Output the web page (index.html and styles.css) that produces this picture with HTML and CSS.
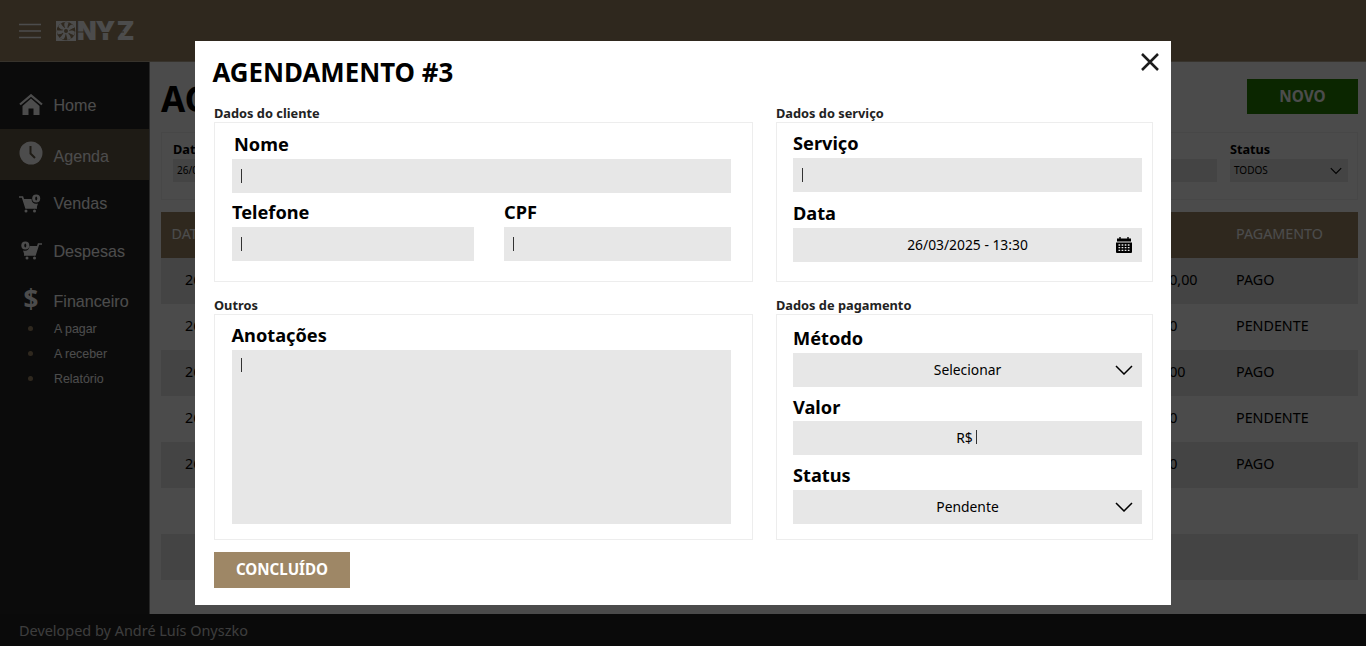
FILE: index.html
```html
<!DOCTYPE html>
<html lang="pt-BR">
<head>
<meta charset="utf-8">
<title>Agenda</title>
<link rel="stylesheet" href="styles.css">
</head>
<body>
<div class="app">
  <header class="topbar">
    <svg class="menu" width="22" height="16" viewBox="0 0 22 16"><path d="M0 1.500h22M0 8h22M0 14.500h22" stroke="#fff" stroke-width="1.300"/></svg>
    <svg class="logo" width="80" height="22" viewBox="0 0 80 22">
      <rect x="0" y="1" width="20" height="20" fill="#fff"/>
      <circle cx="10" cy="11" r="9.300" fill="#9e8766"/>
      <g fill="#fff">
        <path id="blade" d="M9.800 8.500C8 6.500 8 4 8.800 2.200Q10.500 1.600 12.700 2.400C11.500 4.500 12 6.500 11 8.500Z"/>
        <use href="#blade" transform="rotate(51.400 10 11)"/>
        <use href="#blade" transform="rotate(102.800 10 11)"/>
        <use href="#blade" transform="rotate(154.300 10 11)"/>
        <use href="#blade" transform="rotate(205.700 10 11)"/>
        <use href="#blade" transform="rotate(257.100 10 11)"/>
        <use href="#blade" transform="rotate(308.600 10 11)"/>
        <circle cx="10" cy="11" r="3.400"/>
      </g>
      <circle cx="10" cy="11" r="2" fill="#9e8766"/>
      <text class="logo-text" x="21 39.500 60.800" y="20.300">NYZ</text>
      <path d="M21 12h7M44 12.500h11M63 12h5" stroke="#9e8766" stroke-width="1.100"/>
    </svg>
  </header>
  <div class="body">
    <nav class="sidebar">
      <a class="item home"><svg width="24" height="22" viewBox="0 0 24 22"><path d="M1 10.500 12 1.300 23 10.500" fill="none" stroke="#fff" stroke-width="2.200"/><path d="M12 4.500 20.500 12v9h-6v-6.500h-5V21h-6v-9Z" fill="#fff"/></svg><span>Home</span></a>
      <a class="item agenda"><svg width="24" height="24" viewBox="0 0 24 24"><circle cx="12" cy="12" r="11.500" fill="#fff"/><path d="M11.500 5v7.500l4.500 4.500" fill="none" stroke="#675a46" stroke-width="2"/></svg><span>Agenda</span></a>
      <a class="item vendas"><svg width="24" height="20" viewBox="0 0 24 20"><path d="M0 3h3.500L7 14h11" fill="none" stroke="#fff" stroke-width="1.700"/><path d="M4 5h8.500c0 4 3 5.500 6.500 4.500l-1.500 4.500H7Z" fill="#fff"/><circle cx="7" cy="17" r="1.500" fill="#fff"/><circle cx="15.500" cy="17" r="1.500" fill="#fff"/><circle cx="17.200" cy="4.500" r="4" fill="#fff"/><ellipse cx="17.200" cy="4.500" rx="1" ry="1.900" fill="#252525"/></svg><span>Vendas</span></a>
      <a class="item despesas"><svg width="24" height="20" viewBox="0 0 24 20"><path d="M23 3h-3.500L16 14H5" fill="none" stroke="#fff" stroke-width="1.700"/><path d="M19 5h-8.500c0 4-3 5.500-6.500 4.500L5.500 14H16Z" fill="#fff"/><circle cx="8" cy="17" r="1.500" fill="#fff"/><circle cx="15.500" cy="17" r="1.500" fill="#fff"/><circle cx="6.300" cy="4.500" r="4" fill="#fff"/><ellipse cx="6.300" cy="4.500" rx="1" ry="1.900" fill="#252525"/></svg><span>Despesas</span></a>
      <a class="item financeiro"><b class="dollar">$</b><span>Financeiro</span></a>
      <a class="sub"><i></i>A pagar</a>
      <a class="sub"><i></i>A receber</a>
      <a class="sub"><i></i>Relatório</a>
    </nav>
    <main class="content">
      <div class="page-head"><h1>AG</h1><button class="novo">NOVO</button></div>
      <section class="filters">
        <div class="filter date"><label>Data</label><div class="fbox">26/0</div></div>
        <div class="filter grow"><div class="fbox blank"></div></div>
        <div class="filter status"><label>Status</label><div class="fbox">TODOS<svg width="12" height="8" viewBox="0 0 12 8"><path d="M.8 1.200 6 6.500l5.200-5.300" fill="none" stroke="#000" stroke-width="1.100"/></svg></div></div>
      </section>
      <div class="table">
        <div class="tr th"><span>DATA</span><span></span><span>PAGAMENTO</span></div>
        <div class="tr"><span>26</span><span>R$ 1.200,00</span><span>PAGO</span></div>
        <div class="tr"><span>26</span><span>R$ 50,00</span><span>PENDENTE</span></div>
        <div class="tr"><span>26</span><span>R$ 200,00</span><span>PAGO</span></div>
        <div class="tr"><span>26</span><span>R$ 50,00</span><span>PENDENTE</span></div>
        <div class="tr"><span>26</span><span>R$ 80,00</span><span>PAGO</span></div>
        <div class="tr"></div>
        <div class="tr"></div>
      </div>
    </main>
  </div>
  <footer class="footer">Developed by André Luís Onyszko</footer>
</div>

<div class="overlay">
  <div class="modal">
    <div class="modal-head">
      <h2>AGENDAMENTO #3</h2>
      <svg width="18" height="18" viewBox="0 0 18 18"><path d="M1 1l16 16M17 1 1 17" stroke="#1c1c1c" stroke-width="2.500"/></svg>
    </div>
    <div class="grid">
      <section>
        <h3>Dados do cliente</h3>
        <div class="card client">
          <div class="field"><label class="in2">Nome</label><div class="input"><i class="caret"></i></div></div>
          <div class="pair">
            <div class="field tel"><label class="in1">Telefone</label><div class="input"><i class="caret"></i></div></div>
            <div class="field cpf"><label>CPF</label><div class="input"><i class="caret"></i></div></div>
          </div>
        </div>
      </section>
      <section>
        <h3>Dados do serviço</h3>
        <div class="card service">
          <div class="field"><label>Serviço</label><div class="input"><i class="caret"></i></div></div>
          <div class="field"><label>Data</label><div class="input center"><span>26/03/2025 - 13:30</span>
            <svg class="cal" width="16" height="16" viewBox="0 0 16 16"><path d="M1 1.500h14v3H1zM0 5.500h16V15q0 1-1 1H1q-1 0-1-1Z" fill="#000"/><path d="M4 0v3M12 0v3" stroke="#000" stroke-width="1.400"/><path d="M2.500 8h11M2.500 10.700h11M2.500 13.400h11" stroke="#e7e7e7" stroke-width="1.300" stroke-dasharray="1.700 1.400"/></svg></div></div>
        </div>
      </section>
      <section>
        <h3>Outros</h3>
        <div class="card notes">
          <div class="field"><label>Anotações</label><div class="input area"><i class="caret"></i></div></div>
        </div>
      </section>
      <section>
        <h3>Dados de pagamento</h3>
        <div class="card payment">
          <div class="field"><label>Método</label><div class="input center"><span>Selecionar</span><svg class="chev" width="18" height="10" viewBox="0 0 18 10"><path d="M1 1l8 8 8-8" fill="none" stroke="#000" stroke-width="1.500"/></svg></div></div>
          <div class="field valor"><label>Valor</label><div class="input center"><span class="money">R$<i class="caret"></i></span></div></div>
          <div class="field"><label>Status</label><div class="input center"><span>Pendente</span><svg class="chev" width="18" height="10" viewBox="0 0 18 10"><path d="M1 1l8 8 8-8" fill="none" stroke="#000" stroke-width="1.500"/></svg></div></div>
        </div>
      </section>
    </div>
    <button class="done">CONCLUÍDO</button>
  </div>
</div>
</body>
</html>
```
FILE: styles.css
```css
* { box-sizing: border-box; }
body { margin: 0; font-family: "Noto Sans", "Open Sans", sans-serif; color: #000; overflow: hidden; }
h1, h2, h3 { margin: 0; font-weight: 700; }
button { border: 0; padding: 0 0 2px; font-family: inherit; font-weight: 700; color: #fff; }
svg { display: block; flex: none; }

.app { width: 1366px; height: 646px; display: flex; flex-direction: column; background: #fafafa; }
.topbar { height: 62px; flex: none; background: #9e8766; border-bottom: 1px solid #b8ab95; display: flex; align-items: center; padding-left: 19px; gap: 15px; }
.logo { overflow: visible; }
.logo-text { font: 900 25.500px/1 Inter, sans-serif; fill: #fff; }
.body { flex: 1; display: flex; min-height: 0; }

.sidebar { width: 150px; background: #252525; border-right: 1px solid #888; padding-top: 19px; font-family: "Liberation Sans", sans-serif; color: #fff; }
.item { display: flex; align-items: center; height: 48px; padding-left: 19px; font-size: 16.100px; }
.item svg { width: 24px; margin-right: 10.500px; }
.item span { line-height: 20px; }
.item.agenda { height: 51px; background: #675a46; }
.item.agenda svg { margin-top: -3px; }
.item.agenda span { padding-top: 2px; }
.item.vendas { height: 47px; }
.item.vendas span { margin-top: -1px; }
.item.financeiro { height: 41px; padding-top: 2px; }
.item.financeiro span { padding-top: 8px; }
.dollar { width: 24px; margin-right: 10.500px; text-align: center; font: 700 26px/30px "Noto Sans", sans-serif; margin-top: 4px; }
.sub { display: flex; align-items: center; height: 25px; font-size: 12.400px; padding-left: 28px; }
.sub i { width: 5px; height: 5px; border-radius: 50%; background: #9e8766; margin-right: 21px; }

.content { flex: 1; padding: 17px 8px 0 11px; }
.page-head { display: flex; justify-content: space-between; height: 53px; }
h1 { font-size: 35px; line-height: 39px; }
.novo { width: 111px; height: 35px; background: #258000; font-size: 15.300px; }
.filters { height: 68px; border: 1px solid #efefef; padding: 7px 9px 0 11px; display: flex; gap: 13px; }
.filter label { display: block; font-size: 12.700px; line-height: 18px; font-weight: 700; }
.filter.date { width: 150px; }
.filter.grow { flex: 1; }
.filter.status { width: 118px; }
.fbox { height: 23px; margin-top: 1px; background: #e3e3e3; font-size: 10px; line-height: 22px; padding: 0 6px 0 4px; display: flex; justify-content: space-between; }
.fbox svg { margin-top: 8px; }
.fbox.blank { margin-top: 19px; }
.table { margin-top: 12px; }
.tr { height: 46px; display: grid; grid-template-columns: 935px 116px 1fr; line-height: 44px; padding-left: 24px; font-size: 14.300px; }
.tr:nth-child(even) { background: #e3e3e3; }
.tr.th { background: #9e8766; color: #fff; }
.th span:first-child { margin-left: -13.500px; }
.footer { height: 32px; flex: none; background: #232323; color: #ccc; font-size: 14.450px; line-height: 33px; padding-left: 19px; }

.overlay { position: fixed; inset: 0; background: rgba(0, 0, 0, .7); padding: 41px 0 0 195px; }
.modal { width: 976px; height: 564px; background: #fff; }
.modal-head { display: flex; justify-content: space-between; height: 63px; padding: 12px 12px 0 17.500px; }
.modal-head svg { margin-top: -.5px; }
h2 { font-size: 25.850px; line-height: 39px; }
.grid { display: grid; grid-template-columns: 539px 377px; column-gap: 23px; row-gap: 14px; padding-left: 19px; }
h3 { font-size: 12.800px; line-height: 18px; color: #222; }
.card { border: 1px solid #ededed; }
.client, .service { height: 160px; }
.notes, .payment { height: 226px; }
.client, .notes { padding: 9px 21px 0 17px; }
.service, .payment { padding: 8px 10px 0 16px; }
.field label { display: block; font-size: 18.200px; line-height: 24px; font-weight: 700; height: 27px; }
.in2 { padding-left: 2px; }
.pair { display: flex; justify-content: space-between; margin-top: 7px; }
.tel { width: 242px; }
.cpf { width: 227px; }
.input { height: 34px; background: #e7e7e7; display: flex; align-items: center; padding-left: 9px; font-size: 13.850px; position: relative; }
.caret { display: block; width: 1px; height: 14px; background: #333; }
.service .field + .field { margin-top: 9px; }
.notes { padding-top: 8px; }
.notes label { margin-left: -.5px; }
.area { height: 174px; align-items: flex-start; padding-top: 8px; }
.center { justify-content: center; padding: 0 0 2px; }
.money { display: flex; align-items: center; gap: 3px; margin-right: 2px; }
.cal { position: absolute; right: 10px; top: 9px; }
.chev { position: absolute; right: 9px; top: 12px; }
.payment { padding-top: 11px; }
.payment .field + .field { margin-top: 8px; }
.payment .field.valor label { height: 26px; }
.done { display: block; width: 136px; height: 36px; margin: 12px 0 0 19px; background: #9e8766; font-size: 15.150px; }
```
